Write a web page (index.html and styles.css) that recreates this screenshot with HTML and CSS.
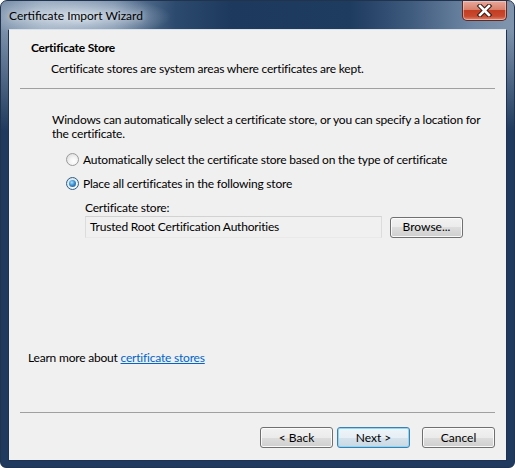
FILE: index.html
```html
<!DOCTYPE html>
<html>
<head>
<meta charset="utf-8">
<link rel="stylesheet" href="styles.css">
</head>
<body>
<div class="window">
  <div class="titlebar">
    <span class="title">Certificate Import Wizard</span>
    <div class="close">
      <svg width="17" height="13" viewBox="0 0 17 13">
        <path d="M4 2 L13 11 M13 2 L4 11" stroke="#3a1a14" stroke-width="4.6" stroke-linecap="square" fill="none"/>
        <path d="M4 2 L13 11 M13 2 L4 11" stroke="#ffffff" stroke-width="2.6" stroke-linecap="square" fill="none"/>
      </svg>
    </div>
  </div>
  <div class="client">
    <div class="header">
      <div class="h-title">Certificate Store</div>
      <div class="h-desc">Certificate stores are system areas where certificates are kept.</div>
    </div>
    <div class="sep"></div>
    <div class="body">
      <p class="intro">Windows can automatically select a certificate store, or you can specify a location for<br>the certificate.</p>
      <div class="radio-row first"><span class="radio"></span><span>Automatically select the certificate store based on the type of certificate</span></div>
      <div class="radio-row"><span class="radio checked"></span><span>Place all certificates in the following store</span></div>
      <div class="store">
        <div class="store-label">Certificate store:</div>
        <div class="store-row">
          <div class="textbox">Trusted Root Certification Authorities</div>
          <button class="btn">Browse...</button>
        </div>
      </div>
      <div class="learn">Learn more about <a class="link">certificate stores</a></div>
    </div>
    <div class="sep"></div>
    <div class="footer">
      <button class="btn">&lt; Back</button>
      <button class="btn default">Next &gt;</button>
      <button class="btn cancel">Cancel</button>
    </div>
  </div>
</div>
</body>
</html>
```
FILE: styles.css
```css
html, body {
  margin: 0;
  padding: 0;
  background: #ffffff;
}

.window {
  width: 515px;
  height: 468px;
  box-sizing: border-box;
  border: 1px solid #22344d;
  border-radius: 7px 7px 6px 6px;
  background:
    radial-gradient(ellipse 95px 22px at 75px 16px, rgba(225, 232, 240, 0.85), rgba(225, 232, 240, 0) 100%),
    linear-gradient(to bottom, rgba(31, 58, 94, 0) 0px, rgba(31, 58, 94, 0) 28px, #1f3a5e 130px),
    linear-gradient(to right, #7a90aa 0%, #8da1b8 8%, #6f87a4 22%, #2c4a6e 34%, #1d3a5e 45%, #1e3b60 68%, #3f5b7e 80%, #7088a5 92%, #8195ad 100%);
  display: flex;
  flex-direction: column;
  padding: 0 7px 6px 7px;
  font-family: "Lato", "Noto Sans", sans-serif;
  font-size: 12px;
  letter-spacing: -0.2px;
  color: #000;
  overflow: hidden;
  white-space: nowrap;
}

.titlebar {
  height: 28px;
  flex: none;
  display: flex;
  justify-content: space-between;
  align-items: flex-start;
}

.title {
  margin-top: 7px;
  margin-left: 1px;
  font-size: 12px;
  letter-spacing: 0;
  line-height: 16px;
  color: #000;
  text-shadow: 0 0 6px rgba(235, 240, 245, 0.9);
}

.close {
  width: 45px;
  height: 20px;
  box-sizing: border-box;
  border: 1px solid #5a2a25;
  border-top: none;
  border-radius: 0 0 5px 5px;
  background: linear-gradient(#e9a99b 0%, #d9806c 45%, #c33e23 50%, #c8492f 80%, #e0876f 100%);
  box-shadow: inset 0 0 0 1px rgba(255, 210, 200, 0.55);
  display: flex;
  align-items: center;
  justify-content: center;
}

.close svg {
  display: block;
}

.client {
  flex: 1;
  display: flex;
  flex-direction: column;
  background: #f0f0f0;
  border: 1px solid #1e3352;
  border-top-color: #d9e1ea;
}

.header {
  height: 58px;
  box-sizing: border-box;
  padding: 10px 0 0 22px;
  flex: none;
}

.h-title {
  font-weight: bold;
  line-height: 15px;
}

.h-desc {
  margin-top: 6px;
  padding-left: 20px;
  line-height: 15px;
}

.sep {
  flex: none;
  height: 0;
  margin: 0 11px;
  border-top: 1px solid #a0a0a0;
}

.body {
  flex: 1;
  display: flex;
  flex-direction: column;
  padding: 24px 0 47px 0;
}

.intro {
  margin: 0;
  padding-left: 43px;
  line-height: 14px;
}

.radio-row {
  display: flex;
  align-items: center;
  gap: 4px;
  height: 15px;
  line-height: 15px;
  margin-top: 9px;
  padding-left: 57px;
}

.radio-row.first {
  margin-top: 11px;
}

.radio {
  width: 13px;
  height: 13px;
  box-sizing: border-box;
  border-radius: 50%;
  border: 1px solid #9a9a9a;
  background: radial-gradient(circle at 60% 65%, #ffffff 0%, #f3f3f3 40%, #d4d4d4 100%);
  position: relative;
  flex: none;
}

.radio.checked {
  border-color: #2f5d85;
  background: radial-gradient(circle at 60% 65%, #ffffff 0%, #eef5fa 40%, #c2d6e6 100%);
}

.radio.checked::after {
  content: "";
  position: absolute;
  left: 2px;
  top: 2px;
  width: 7px;
  height: 7px;
  border-radius: 50%;
  background: radial-gradient(circle at 40% 35%, #a6e3ff 0%, #3c8fd0 45%, #1b4f80 100%);
}

.store {
  margin-top: 9px;
  padding-left: 76px;
}

.store-label {
  line-height: 15px;
}

.store-row {
  margin-top: 1px;
  display: flex;
  align-items: center;
  gap: 8px;
}

.textbox {
  width: 297px;
  height: 22px;
  box-sizing: border-box;
  border: 1px solid #dcdcdc;
  border-top-color: #d2d2d2;
  border-bottom-color: #e9e9e9;
  background: #f0f0f0;
  padding-left: 4px;
  line-height: 19px;
}

.btn {
  width: 73px;
  height: 21px;
  box-sizing: border-box;
  padding: 0;
  border: 1px solid #707070;
  border-radius: 3px;
  background: linear-gradient(#f2f2f2 0%, #ebebeb 50%, #dddddd 50%, #cfcfcf 100%);
  box-shadow: inset 0 0 0 1px rgba(252, 252, 252, 0.9);
  font-family: "Lato", "Noto Sans", sans-serif;
  font-size: 12px;
  letter-spacing: 0;
  color: #000;
  line-height: 18px;
}

.btn.default {
  border-color: #3c7fb1;
  box-shadow: inset 0 0 0 1px #8fd6f5;
  background: linear-gradient(#eef5f9 0%, #e6eff5 50%, #d6e3ec 50%, #c8d8e4 100%);
}

.learn {
  margin-top: auto;
  padding-left: 19px;
  line-height: 15px;
}

.link {
  color: #0066cc;
  text-decoration: underline;
}

.footer {
  height: 47px;
  box-sizing: border-box;
  flex: none;
  padding: 14px 11px 0 0;
  display: flex;
  justify-content: flex-end;
  align-items: flex-start;
  gap: 4px;
}

.btn.cancel {
  margin-left: 8px;
}
```
